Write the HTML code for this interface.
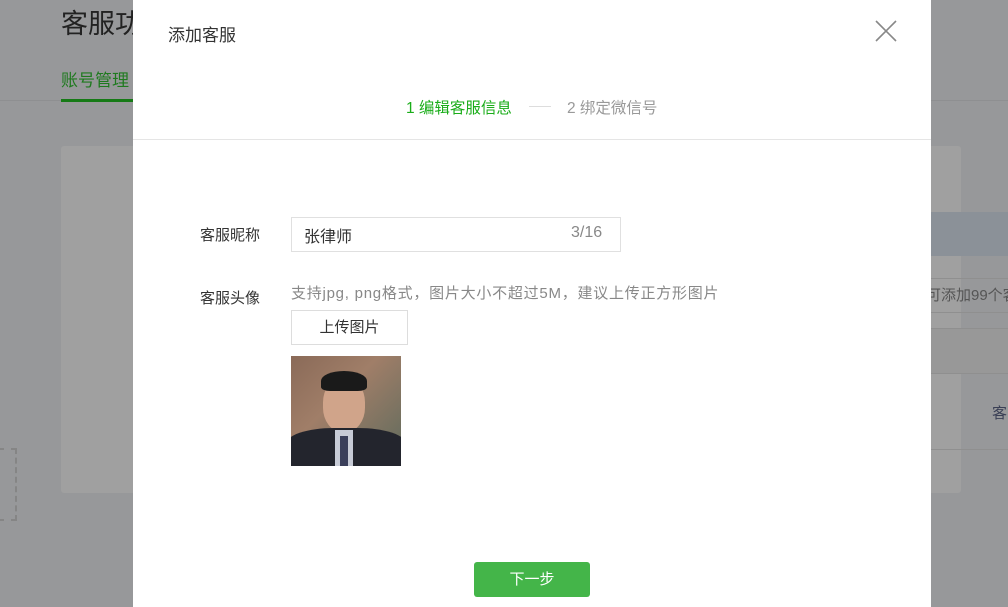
<!DOCTYPE html>
<html><head><meta charset="utf-8"><style>
*{margin:0;padding:0;box-sizing:border-box}
body{width:1008px;height:607px;overflow:hidden;background:#97989a;font-family:"Liberation Sans","Noto Sans CJK SC",sans-serif;position:relative}
.a{position:absolute}
</style></head><body>
<div class="a" style="left:61px;top:2px;font-size:27px;color:#222">客服功能</div>
<div class="a" style="left:61px;top:66px;font-size:17px;color:#1f7a1f">账号管理</div>
<div class="a" style="left:0;top:100px;width:1008px;height:1px;background:#8e8f91"></div>
<div class="a" style="left:61px;top:99px;width:72px;height:3px;background:#167a16"></div>
<div class="a" style="left:61px;top:146px;width:900px;height:347px;background:#a0a0a0;border-radius:3px"></div>
<div class="a" style="left:930px;top:212px;width:78px;height:44px;background:#8b9198"></div>
<div class="a" style="left:930px;top:278px;width:78px;height:1px;background:#8f8f8f"></div>
<div class="a" style="left:926px;top:284px;font-size:15px;color:#555;white-space:nowrap">可添加99个客</div>
<div class="a" style="left:930px;top:312px;width:78px;height:1px;background:#8f8f8f"></div>
<div class="a" style="left:930px;top:328px;width:78px;height:46px;background:#989898;border-top:1px solid #8f8f8f;border-bottom:1px solid #8f8f8f"></div>
<div class="a" style="left:992px;top:402px;font-size:15px;color:#3a3f55">客</div>
<div class="a" style="left:930px;top:449px;width:78px;height:1px;background:#8f8f8f"></div>
<div class="a" style="left:-2px;top:448px;width:19px;height:73px;border:2px dashed #858585"></div>

<div class="a" style="left:133px;top:0;width:798px;height:607px;background:#fff">
  <div class="a" style="left:35px;top:21px;font-size:17px;color:#333">添加客服</div>
  <svg class="a" style="left:742px;top:20px" width="22" height="22"><path d="M1 1L21 21M21 1L1 21" stroke="#888" stroke-width="1.6"/></svg>
  <div class="a" style="left:273px;top:96px;font-size:15.5px;color:#1aad19;white-space:nowrap">1 编辑客服信息</div>
  <div class="a" style="left:396px;top:106px;width:22px;height:1px;background:#ddd"></div>
  <div class="a" style="left:434px;top:96px;font-size:15.5px;color:#999;white-space:nowrap">2 绑定微信号</div>
  <div class="a" style="left:0;top:139px;width:798px;height:1px;background:#e5e5e5"></div>
  <div class="a" style="left:67px;top:224px;font-size:15px;color:#333">客服昵称</div>
  <div class="a" style="left:158px;top:217px;width:330px;height:35px;border:1px solid #e0e0e0"></div>
  <div class="a" style="left:171px;top:223px;font-size:16px;color:#333">张律师</div>
  <div class="a" style="left:438px;top:224px;font-size:16px;color:#888">3/16</div>
  <div class="a" style="left:67px;top:287px;font-size:15px;color:#333">客服头像</div>
  <div class="a" style="left:158px;top:282px;font-size:15px;color:#888;white-space:nowrap;letter-spacing:0.75px">支持jpg, png格式，图片大小不超过5M，建议上传正方形图片</div>
  <div class="a" style="left:158px;top:310px;width:117px;height:35px;border:1px solid #ddd;font-size:15px;color:#333;text-align:center;line-height:33px">上传图片</div>
  <div class="a" style="left:158px;top:356px;width:110px;height:110px;overflow:hidden;background:linear-gradient(135deg,#8a6a58,#a07e68 40%,#5d6a5c)">
    <div class="a" style="left:32px;top:22px;width:42px;height:54px;border-radius:45%;background:#d0a48a"></div>
    <div class="a" style="left:30px;top:15px;width:46px;height:20px;border-radius:50% 50% 20% 20%;background:#1a1a1a"></div>
    <div class="a" style="left:-5px;top:72px;width:120px;height:40px;border-radius:40% 40% 0 0;background:#23252d"></div>
    <div class="a" style="left:44px;top:74px;width:18px;height:36px;background:#c7cbd6"></div>
    <div class="a" style="left:49px;top:80px;width:8px;height:30px;background:#3a3f5a"></div>
  </div>
  <div class="a" style="left:341px;top:562px;width:116px;height:35px;background:#44b549;border-radius:3px;color:#fff;font-size:15px;text-align:center;line-height:35px">下一步</div>
</div>
</body></html>
